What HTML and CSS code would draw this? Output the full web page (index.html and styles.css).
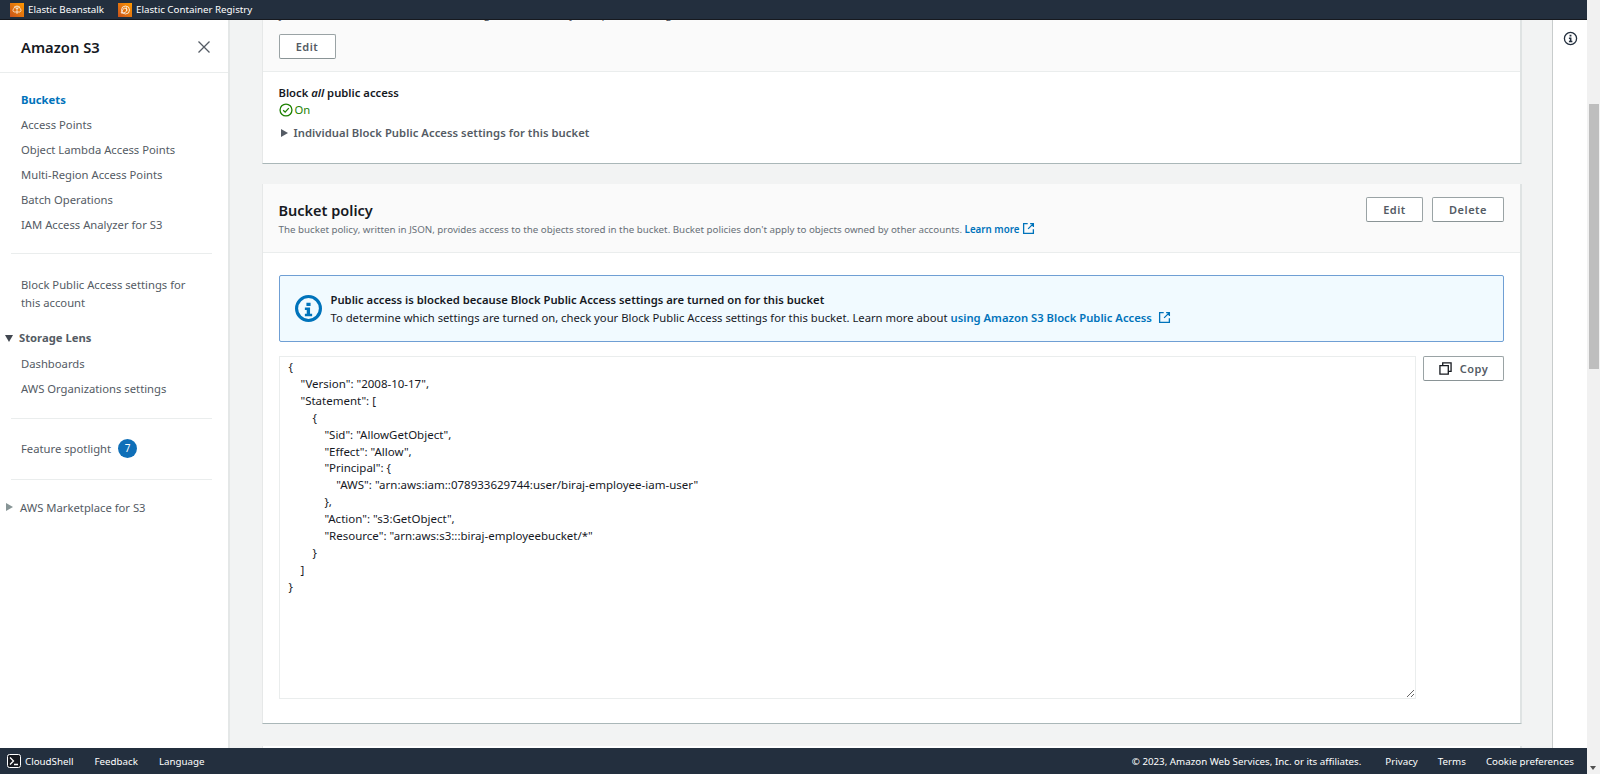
FILE: index.html
```html
<!DOCTYPE html>
<html lang="en">
<head>
<meta charset="utf-8">
<title>Amazon S3</title>
<link rel="stylesheet" href="styles.css">
</head>
<body>
<div class="page">
  <header class="topbar">
    <a class="service">
      <svg class="svc-icon" viewBox="0 0 14 14"><defs><linearGradient id="o" x1="0" y1="1" x2="1" y2="0"><stop offset="0" stop-color="#c8511b"/><stop offset="1" stop-color="#ff9900"/></linearGradient></defs><rect width="14" height="14" fill="url(#o)"/><path d="M7 3v8M7 6 4.500 4M7 6l2.500-2M4 5.500a3 2.500 0 0 1 6 0 2 2 0 0 1 0 3.500H4a2 2 0 0 1 0-3.500z" fill="none" stroke="#fff" stroke-width=".7"/></svg>
      <span>Elastic Beanstalk</span>
    </a>
    <a class="service">
      <svg class="svc-icon" viewBox="0 0 14 14"><rect width="14" height="14" fill="url(#o)"/><circle cx="7.500" cy="7" r="4" fill="none" stroke="#fff" stroke-width=".8"/><path d="M3 10 6 5l3 1-1 3-3 1zM8 3.500 9 8" fill="none" stroke="#fff" stroke-width=".7"/></svg>
      <span>Elastic Container Registry</span>
    </a>
  </header>

  <div class="middle">
    <nav class="sidebar">
      <div class="side-head">
        <h2>Amazon S3</h2>
        <svg class="close" viewBox="0 0 12 12"><path d="M.5.500l11 11M11.500.500l-11 11" fill="none" stroke="#545b64" stroke-width="1.300"/></svg>
      </div>
      <ul class="nav-list first">
        <li class="active">Buckets</li>
        <li>Access Points</li>
        <li>Object Lambda Access Points</li>
        <li>Multi-Region Access Points</li>
        <li>Batch Operations</li>
        <li>IAM Access Analyzer for S3</li>
      </ul>
      <hr class="side-rule">
      <p class="nav-para">Block Public Access settings for this account</p>
      <div class="nav-group"><span class="tri-down"></span>Storage Lens</div>
      <ul class="nav-list sub">
        <li>Dashboards</li>
        <li>AWS Organizations settings</li>
      </ul>
      <hr class="side-rule rule-b">
      <div class="spot">Feature spotlight <span class="badge">7</span></div>
      <hr class="side-rule rule-c">
      <div class="market"><span class="tri-right grey"></span>AWS Marketplace for S3</div>
    </nav>

    <main class="main">
      <section class="card card-a">
        <div class="card-head head-a">
          <p class="clipped">you can customize the individual settings below to suit your specific storage use cases. Learn more <svg class="ext ext-top" viewBox="0 0 16 16"><path d="M7 2H2v12h12V9M10 2h4v4M14 2 7.500 8.500" fill="none" stroke="#0073bb" stroke-width="1.600"/></svg></p>
          <button class="btn btn-edit-a">Edit</button>
        </div>
        <div class="card-body body-a">
          <div class="strong">Block <em>all</em> public access</div>
          <div class="status">
            <svg class="ok" viewBox="0 0 16 16"><circle cx="8" cy="8" r="6.800" fill="none" stroke="#1d8102" stroke-width="1.500"/><path d="M4.800 8.200 7 10.400l4.200-4.600" fill="none" stroke="#1d8102" stroke-width="1.500"/></svg>
            <span>On</span>
          </div>
          <div class="expander"><span class="tri-right"></span>Individual Block Public Access settings for this bucket</div>
        </div>
      </section>

      <section class="card card-b">
        <div class="card-head head-b">
          <div class="head-text">
            <h3>Bucket policy</h3>
            <p class="desc">The bucket policy, written in JSON, provides access to the objects stored in the bucket. Bucket policies don't apply to objects owned by other accounts. <a class="link">Learn more</a>
              <svg class="ext ext-s" viewBox="0 0 16 16"><path d="M7 2H2v12h12V9M10 2h4v4M14 2 7.500 8.500" fill="none" stroke="#0073bb" stroke-width="1.600"/></svg>
            </p>
          </div>
          <div class="head-actions">
            <button class="btn btn-edit">Edit</button>
            <button class="btn btn-delete">Delete</button>
          </div>
        </div>
        <div class="card-body body-b">
          <div class="alert">
            <svg class="info" viewBox="0 0 26 26"><circle cx="13" cy="13" r="11.500" fill="none" stroke="#0073bb" stroke-width="3"/><path d="M11 7.500h4v3h-4zM9.500 12h5v6h2v2.500h-7V18h1.800v-3.500H9.500z" fill="#0073bb"/></svg>
            <div class="alert-text">
              <div class="alert-title">Public access is blocked because Block Public Access settings are turned on for this bucket</div>
              <div class="alert-msg">To determine which settings are turned on, check your Block Public Access settings for this bucket. Learn more about <a class="link">using Amazon S3 Block Public Access</a>
                <svg class="ext ext-l" viewBox="0 0 16 16"><path d="M7 2H2v12h12V9M10 2h4v4M14 2 7.500 8.500" fill="none" stroke="#0073bb" stroke-width="1.600"/></svg>
              </div>
            </div>
          </div>
          <div class="policy-row">
            <pre class="policy">{
    "Version": "2008-10-17",
    "Statement": [
        {
            "Sid": "AllowGetObject",
            "Effect": "Allow",
            "Principal": {
                "AWS": "arn:aws:iam::078933629744:user/biraj-employee-iam-user"
            },
            "Action": "s3:GetObject",
            "Resource": "arn:aws:s3:::biraj-employeebucket/*"
        }
    ]
}</pre>
            <button class="btn btn-copy">
              <svg class="copy-icon" viewBox="0 0 14 14"><path d="M1 4h9v9H1zM4 4V1h9v9h-3" fill="none" stroke="#16191f" stroke-width="1.400"/></svg>
              Copy
            </button>
          </div>
        </div>
      </section>

      <section class="card card-c"></section>
    </main>

    <aside class="rail">
      <svg class="rail-icon" viewBox="0 0 16 16"><circle cx="8" cy="8" r="6.500" fill="none" stroke="#232f3e" stroke-width="1.400"/><path d="M7 4h2v1.800H7zM6.300 7h2.700v3.500h1V12H6.300v-1.500h1v-2h-1z" fill="#232f3e"/></svg>
    </aside>
  </div>

  <footer class="footer">
    <a class="foot-link shell">
      <svg class="shell-icon" viewBox="0 0 14 14"><rect x=".5" y=".5" width="13" height="13" rx="2" fill="#16191f" stroke="#fff"/><path d="M3 3.500 6.500 7 3 10.500M7 10.500h4" fill="none" stroke="#fff" stroke-width="1.300"/></svg>
      CloudShell
    </a>
    <a class="foot-link wide">Feedback</a>
    <a class="foot-link">Language</a>
    <span class="copyright">© 2023, Amazon Web Services, Inc. or its affiliates.</span>
    <a class="foot-link">Privacy</a>
    <a class="foot-link">Terms</a>
    <a class="foot-link">Cookie preferences</a>
  </footer>
</div>
<div class="scrollbar">
  <div class="thumb"></div>
  <span class="arrow"></span>
</div>
</body>
</html>
```
FILE: styles.css
```css
* { box-sizing: border-box; }
html, body { height: 100%; }
body {
  margin: 0;
  display: flex;
  overflow: hidden;
  font-family: "Noto Sans", "Open Sans", sans-serif;
  font-size: 11.250px;
  color: #16191f;
  background: #fff;
}
.page { flex: 1; min-width: 0; display: flex; flex-direction: column; height: 774px; }

.topbar {
  flex: none;
  height: 20px;
  background: #232f3e;
  border-bottom: 1px solid #16191f;
  display: flex;
  align-items: center;
  padding-left: 10px;
  gap: 14px;
  color: #fff;
}
.service { display: flex; align-items: center; gap: 4px; font-size: 9.750px; }
.svc-icon { width: 14px; height: 14px; }

.middle { flex: 1; min-height: 0; display: flex; }

.sidebar {
  flex: none;
  width: 230px;
  background: #fff;
  border-right: 2px solid #e4e7e7;
  color: #545b64;
  font-size: 11.250px;
}
.side-head {
  height: 53px;
  display: flex;
  align-items: center;
  justify-content: space-between;
  padding: 2px 18px 0 21px;
  border-bottom: 1px solid #eaeded;
}
.side-head h2 { margin: 0; font-size: 14.750px; font-weight: 600; color: #16191f; }
.close { width: 12px; height: 12px; }
.nav-list { list-style: none; margin: 0; padding: 0 0 0 21px; }
.nav-list li { height: 25px; line-height: 25px; }
.nav-list.first { padding-top: 14px; }
.active { color: #0073bb; font-weight: 700; }
.side-rule { margin: 0 16px 0 11px; border: 0; border-top: 1px solid #eaeded; }
.nav-list.first + .side-rule { margin-top: 16px; }
.nav-para { margin: 22px 30px 0 21px; line-height: 18px; }
.nav-group { margin-top: 17px; padding-left: 5px; height: 18px; line-height: 18px; display: flex; align-items: center; gap: 6px; font-weight: 700; }
.tri-down { width: 0; height: 0; border-left: 4.500px solid transparent; border-right: 4.500px solid transparent; border-top: 7px solid #414750; }
.nav-list.sub { padding-top: 4px; }
.rule-b { margin-top: 17px; }
.spot { margin-top: 17px; padding-left: 21px; display: flex; align-items: center; gap: 7px; height: 24px; }
.badge { width: 19px; height: 19px; border-radius: 50%; background: #0f6fb8; color: #fff; font-size: 10px; display: flex; align-items: center; justify-content: center; }
.rule-c { margin-top: 19px; }
.market { margin-top: 18px; padding-left: 6px; display: flex; align-items: center; gap: 7px; height: 18px; }
.tri-right { display: inline-block; width: 0; height: 0; border-top: 4.500px solid transparent; border-bottom: 4.500px solid transparent; border-left: 7px solid #545b64; }
.tri-right.grey { border-left-color: #879596; }

.main {
  flex: 1;
  min-width: 0;
  background: #f2f3f3;
  padding: 0 30px 0 31.500px;
  overflow: hidden;
  display: flex;
  flex-direction: column;
  gap: 20px;
  border-right: 1px solid #c8cccc;
}
.card {
  flex: none;
  background: #fff;
  border-left: 1px solid #e6e8e8;
  border-right: 2px solid #dfe3e3;
  border-bottom: 1px solid #aab7b8;
}
.card-a { height: 144px; }
.card-b { height: 540px; }
.card-c { height: 40px; border-bottom: 0; margin-top: 2px; }
.card-head { background: #fafafa; border-bottom: 1px solid #eaeded; padding: 0 16px; }
.head-a { height: 52px; overflow: hidden; }
.clipped { margin: -14px 0 0; height: 16px; line-height: 16px; font-size: 11.250px; color: #545b64; white-space: nowrap; }
.btn-edit-a { margin-top: 12px; width: 57px; }
.btn {
  height: 25px;
  background: #fff;
  border: 1px solid #9aa3a5;
  border-bottom-color: #8a9496;
  border-radius: 2px;
  color: #545b64;
  font: 600 11px "Noto Sans", sans-serif;
  letter-spacing: .5px;
  padding: 0;
}
.body-a { padding: 12px 16px 0; }
.strong { font-weight: 600; line-height: 17px; }
.strong em { font-style: italic; }
.status { display: flex; align-items: center; gap: 2px; color: #1d8102; height: 17px; }
.ok { width: 14px; height: 14px; }
.expander { margin-top: 6px; padding-left: 2px; display: flex; align-items: center; gap: 6px; height: 17px; font-weight: 600; color: #545b64; letter-spacing: .05px; }

.head-b { height: 69px; display: flex; justify-content: space-between; align-items: flex-start; }
.head-text { padding-top: 16px; }
h3 { margin: 0; font-size: 14.500px; font-weight: 600; line-height: 20px; }
.desc { margin: 2px 0 0; font-size: 9.750px; color: #687078; line-height: 14px; }
.link { color: #0073bb; font-weight: 600; }
.ext { width: 13px; height: 13px; vertical-align: -2px; margin-left: 2px; }
.ext-s { margin-left: 0; }
.ext-l { margin-left: 3px; }
.head-actions { display: flex; gap: 9px; padding-top: 13px; }
.btn-edit { width: 57px; }
.btn-delete { width: 72px; }

.body-b { padding: 22px 16px 0; }
.alert {
  height: 67px;
  display: flex;
  align-items: center;
  gap: 9px;
  padding-left: 15px;
  background: #f1faff;
  border: 1px solid #6f9fd4;
  border-radius: 2px;
}
.info { width: 27px; height: 27px; flex: none; }
.alert-text { line-height: 18px; }
.alert-title { font-weight: 600; }
.policy-row { display: flex; justify-content: space-between; align-items: flex-start; margin-top: 14px; }
.policy {
  margin: 0;
  width: 1137px;
  height: 343px;
  padding: 2px 9px;
  border: 1px solid #eaeded;
  font: 11.500px/16.900px "Noto Sans", sans-serif;
  resize: both;
  overflow: auto;
}
.btn-copy { width: 81px; display: flex; align-items: center; justify-content: center; gap: 8px; }
.copy-icon { width: 13px; height: 13px; }

.rail { flex: none; width: 34px; background: #fff; display: flex; justify-content: center; padding-top: 11px; align-items: flex-start; }
.rail-icon { width: 15px; height: 15px; }

.footer {
  flex: none;
  height: 26px;
  background: #232f3e;
  color: #fff;
  display: flex;
  align-items: center;
  padding: 0 13px 0 7px;
  gap: 20px;
  font-size: 9.750px;
}
.shell { display: flex; align-items: center; gap: 4px; margin-right: 1px; }
.wide { margin-right: 1px; }
.shell-icon { width: 14px; height: 14px; }
.copyright { margin-left: auto; margin-right: 4px; }

.scrollbar { flex: none; width: 13px; height: 774px; background: #f1f1f1; position: relative; padding: 104px 1px 0 2px; }
.thumb { height: 265px; background: #bebebe; }
.arrow { position: absolute; left: 3px; bottom: 4px; width: 0; height: 0; border-left: 3.500px solid transparent; border-right: 3.500px solid transparent; border-top: 4px solid #505050; }
```
